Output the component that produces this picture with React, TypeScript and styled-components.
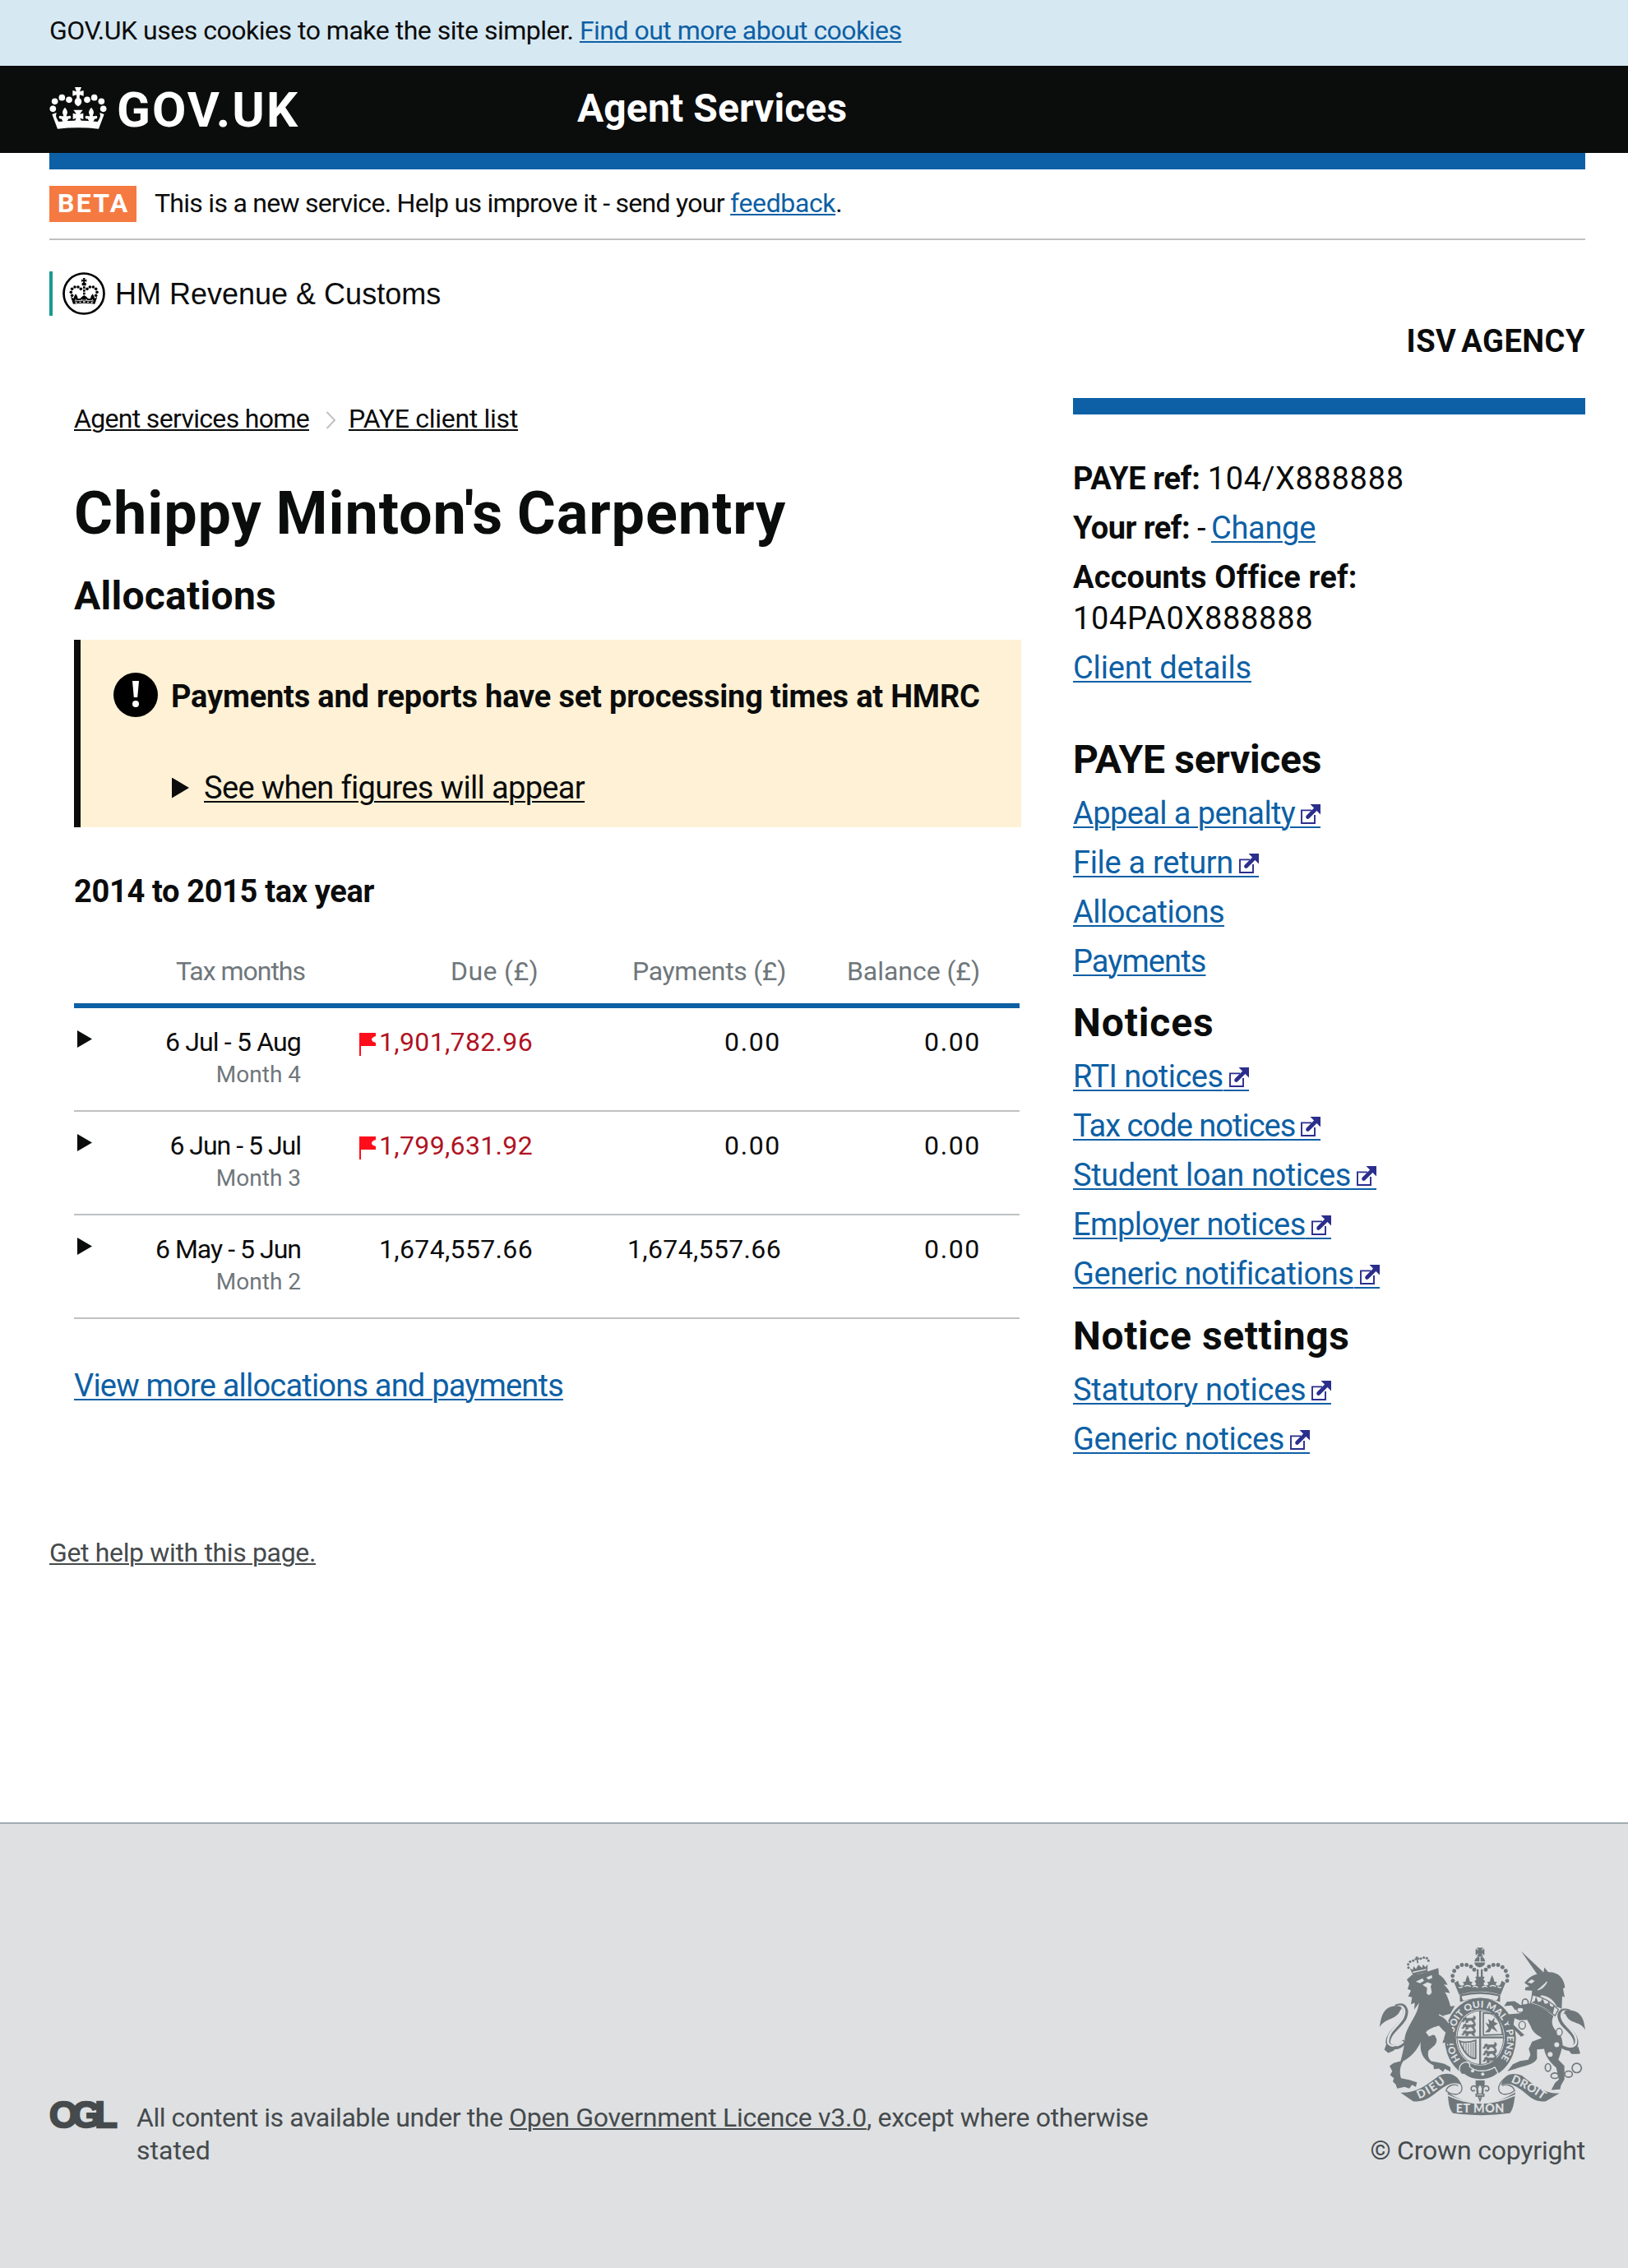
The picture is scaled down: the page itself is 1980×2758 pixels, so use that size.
import React from 'react';
import styled, { createGlobalStyle } from 'styled-components';

const color = {
  ink: '#0b0c0c',
  blue: '#0d60a5',
  orange: '#f57a42',
  grey: '#6f777b',
  line: '#bfc1c3',
  footer: '#454a4c',
  footerBg: '#dee0e2',
  arms: '#6f777b',
  indigo: '#2b2e8c',
};

const GlobalStyle = createGlobalStyle`
  * { box-sizing: border-box; }
  body {
    margin: 0;
    background: #fff;
    color: ${color.ink};
    font-family: Roboto, "Noto Sans", sans-serif;
    font-size: 38px;
    line-height: 50px;
  }
  h1, h2, h3, p, ul { margin: 0; padding: 0; }
  ul { list-style: none; }
`;

/* Run of text with its own tracking */
const Run = styled.span<{ $track?: number; $bold?: boolean }>`
  letter-spacing: ${(p) => p.$track ?? 0}px;
  font-weight: ${(p) => (p.$bold ? 700 : 'inherit')};
  white-space: pre;
`;

const Link = styled.a<{ $track?: number; $tone?: string; $offset?: number }>`
  color: ${(p) => p.$tone ?? color.blue};
  letter-spacing: ${(p) => p.$track ?? 0}px;
  text-decoration: underline;
  text-decoration-thickness: 2px;
  text-underline-offset: ${(p) => p.$offset ?? 3}px;
  white-space: nowrap;
`;

const Page = styled.div`
  width: 1980px;
  height: 2758px;
  display: flex;
  flex-direction: column;
`;

const CookieBar = styled.div`
  height: 80px;
  padding: 17px 60px 0;
  background: #d6e8f2;
  font-size: 32px;
  line-height: 40px;
`;

const Header = styled.header`
  height: 106px;
  padding-left: 60px;
  display: grid;
  grid-template-columns: 642px 1fr;
  background: ${color.ink};
  color: #fff;
`;

const Brand = styled.div`
  display: flex;
  gap: 12px;
  padding-top: 24px;
  font-size: 60px;
  line-height: 60px;
  font-weight: 700;
  letter-spacing: 2.1px;
`;

const ServiceName = styled.div`
  padding-top: 22px;
  font-size: 48px;
  line-height: 60px;
  font-weight: 700;
  letter-spacing: 0.1px;
`;

const Wrapper = styled.div`
  margin: 0 52px 0 60px;
`;

const HeaderBar = styled.div`
  height: 20px;
  background: ${color.blue};
`;

const PhaseBanner = styled.div`
  display: flex;
  height: 86px;
  padding-top: 20px;
  border-bottom: 2px solid ${color.line};
  font-size: 32px;
  line-height: 42px;
`;

const PhaseTag = styled.strong`
  width: 106px;
  height: 44px;
  margin-right: 22px;
  padding-left: 10px;
  background: ${color.orange};
  color: #fff;
  letter-spacing: 2.3px;
`;

const Department = styled.div`
  display: flex;
  align-items: center;
  height: 54px;
  margin-top: 38px;
  padding-left: 11px;
  border-left: 4px solid #199990;
  font-family: "Liberation Sans", Arial, sans-serif;
  font-size: 36px;
  line-height: 54px;
`;

const DepartmentName = styled.span`
  margin-left: 11px;
  padding-top: 2px;
`;

const AgencyName = styled.p`
  margin-top: 11px;
  text-align: right;
  font-weight: 700;
  line-height: 40px;
  letter-spacing: 0.5px;
  word-spacing: -4px;
`;

const Columns = styled.div`
  display: grid;
  grid-template-columns: 1152px 623px;
  justify-content: space-between;
  height: 1350px;
  padding-left: 30px;
`;

const Main = styled.main`
  padding-top: 54px;
`;

const Breadcrumb = styled.nav`
  display: flex;
  align-items: center;
  font-size: 32px;
  line-height: 40px;
`;

const Chevron = styled.svg`
  width: 13px;
  height: 22px;
  margin: 3px 15px 0 20px;
`;

const Title = styled.h1`
  margin-top: 56px;
  font-size: 72px;
  line-height: 80px;
  letter-spacing: 0.9px;
  word-spacing: -2px;
`;

const SectionTitle = styled.h2`
  margin-top: 35px;
  font-size: 48px;
  line-height: 50px;
  letter-spacing: 0.27px;
`;

const Notice = styled.section`
  display: grid;
  grid-template-columns: 54px 1fr;
  column-gap: 16px;
  height: 228px;
  margin-top: 28px;
  padding: 40px 0 0 40px;
  border-left: 8px solid ${color.ink};
  background: #fff1d5;
  line-height: 40px;
`;

const NoticeIcon = styled.svg`
  width: 54px;
  height: 54px;
`;

const NoticeText = styled.div`
  padding-top: 9px;
`;

const NoticeTitle = styled.p`
  font-weight: 700;
  letter-spacing: -0.19px;
  white-space: nowrap;
`;

const Disclosure = styled.div`
  display: flex;
  align-items: center;
  gap: 18px;
  margin-top: 71px;
  padding-left: 1px;
`;

const Triangle = styled.span<{ $w: number; $h: number }>`
  width: ${(p) => p.$w}px;
  height: ${(p) => p.$h}px;
  flex: none;
  background: ${color.ink};
  clip-path: polygon(0 0, 100% 50%, 0 100%);
`;

const YearTitle = styled.h3`
  margin-top: 58px;
  font-size: 38px;
  line-height: 40px;
  letter-spacing: -0.34px;
`;

const TableRow = styled.div<{ $head?: boolean }>`
  display: grid;
  grid-template-columns: 282px 283px 302px 236px;
  width: 1150px;
  height: ${(p) => (p.$head ? 66 : 126)}px;
  margin-top: ${(p) => (p.$head ? 56 : 0)}px;
  padding-top: ${(p) => (p.$head ? 1 : 21)}px;
  border-bottom: ${(p) => (p.$head ? `6px solid ${color.blue}` : `2px solid ${color.line}`)};
  color: ${(p) => (p.$head ? color.grey : color.ink)};
  font-size: 32px;
  line-height: 40px;
  text-align: right;
`;

const Cell = styled.div<{ $inset?: number; $track?: number; $late?: boolean }>`
  padding-right: ${(p) => p.$inset ?? 7}px;
  letter-spacing: ${(p) => p.$track ?? 0}px;
  color: ${(p) => (p.$late ? '#b01223' : 'inherit')};
`;

const MonthCell = styled.div`
  display: flex;
  justify-content: space-between;
  padding: 0 6px 0 4px;

  > ${Triangle} {
    margin-top: 6px;
  }
`;

const MonthNumber = styled.div`
  color: ${color.grey};
  font-size: 28px;
  line-height: 39px;
`;

const Flag = styled.svg`
  width: 20px;
  height: 28px;
  margin-right: 4px;
  vertical-align: -6px;
`;

const MoreLink = styled.p`
  margin-top: 61px;
  line-height: 40px;
`;

const Aside = styled.aside`
  padding-top: 49px;
`;

const AsideBar = styled.div`
  height: 20px;
  margin-bottom: 53px;
  background: ${color.blue};
`;

const Item = styled.li`
  margin-bottom: 10px;
`;

const AsideTitle = styled.h2<{ $top?: number }>`
  margin: ${(p) => p.$top ?? 25.3}px 0 15.3px;
  font-size: 48px;
  line-height: 50px;
`;

const ExternalMark = styled.span`
  display: inline-block;
  height: 29px;
  padding-left: 7px;
  border-bottom: 2px solid ${color.blue};
  vertical-align: -5px;

  svg {
    display: block;
    width: 24px;
    height: 24px;
  }
`;

const HelpLine = styled.p`
  margin-top: 83px;
  font-size: 32px;
  line-height: 40px;
`;

const Footer = styled.footer`
  display: flex;
  align-items: flex-end;
  justify-content: space-between;
  height: 542px;
  margin-top: auto;
  padding: 0 52px 123px 60px;
  border-top: 2px solid #a1acb2;
  background: ${color.footerBg};
  color: ${color.footer};
  font-size: 32px;
  line-height: 40px;
`;

const Licence = styled.div`
  display: flex;
  height: 80px;
`;

const OglMark = styled.span`
  width: 106px;
  font-family: "Liberation Sans", Arial, sans-serif;
  font-size: 45px;
  font-weight: 700;
  line-height: 34px;
  letter-spacing: -7.4px;
  -webkit-text-stroke: 2.4px ${color.footer};
`;

const LicenceText = styled.p`
  width: 1260px;
`;

const Copyright = styled.div`
  display: flex;
  flex-direction: column;
  align-items: flex-end;
  gap: 22px;
  letter-spacing: -0.2px;
`;

const Arms = styled.svg`
  width: 250px;
  height: 205px;
  overflow: visible;
`;

const BrandCrown = styled.svg`
  width: 70px;
  height: 52px;
  margin-top: 1px;
`;

const Roundel = styled.svg`
  width: 54px;
  height: 54px;
`;

function GovCrown() {
  const pearls = [[43, 127], [50, 100], [76, 86], [102, 94]];
  const fleur =
    'M87 122c5 6 9 12 9 19l-4 13h8c4-4 9-1 9 4-1 5-7 7-9 5-2 6-6 9-7 14H81c-1-5-5-8-7-14-2 2-8 0-9-5 0-5 5-8 9-4h8l-4-13c0-7 4-13 9-19z';
  return (
    <BrandCrown viewBox="30 45 210 156" fill="#fff">
      {pearls.map(([x, y]) => (
        <g key={x}>
          <circle cx={x} cy={y} r="11.5" />
          <circle cx={270 - x} cy={y} r="11.5" />
        </g>
      ))}
      <path d="M123 48h24l-6 16 14-4v20l-14-4-1 11c12 9 10 24-5 31-15-7-17-22-5-31l-1-11-14 4V60l14 4z" />
      <path d="M60 200L40 147l16-6-2 12c2 8 6 16 10 21q71-9 142 0c4-5 8-13 10-21l-2-12 16 6-20 53q-75-8-150 0z" />
      <path d="M118 131h34l-11 15 13-3v22l-12-4 6 14h-26l6-14-12 4v-22l13 3z" />
      <path d={fleur} />
      <path d={fleur} transform="translate(270 0) scale(-1 1)" />
    </BrandCrown>
  );
}

function HmrcRoundel() {
  const pearls = [[112, 117], [108, 105], [112, 93], [122, 86], [134, 86], [144, 93]];
  return (
    <Roundel viewBox="74 29 162 162">
      <circle cx="155" cy="110" r="73.5" fill="none" stroke="#000" strokeWidth="8" />
      <g fill="#000">
        {pearls.map(([x, y]) => (
          <g key={`${x}-${y}`}>
            <circle cx={x} cy={y} r="5.4" />
            <circle cx={311 - x} cy={y} r="5.4" />
          </g>
        ))}
        <path d="M152 53h8l-2 7 7-2v9l-7-2 1 6h4v10h-15V71h4l1-6-7 2v-9l7 2z" />
        <path d="M152 84h8v8h-8zM152 95h8v8h-8zM152 106h8v8h-8z" />
        <path d="M107 121l10 7 3-8 5-9 6 9 2 9 9-1 6-7 8-5 8 5 6 7 9 1 2-9 6-9 5 9 3 8 9-7-9 27q-40-6-79 0z" />
      </g>
      <path d="M121 137q35-6 70 0M123 131l5 4M188 131l-5 4M145 133l5-2M167 133l-5-2" stroke="#fff" strokeWidth="2.5" fill="none" />
      <path d="M124 143h6M138 141h7M152 140h8M167 141h7M181 143h6" stroke="#fff" strokeWidth="4" />
    </Roundel>
  );
}

function ExternalIcon() {
  return (
    <ExternalMark>
      <svg viewBox="0 0 24 24">
        <path d="M13 7.4H1V23h16V13" fill="none" stroke={color.indigo} strokeWidth="1.9" />
        <path d="M8.5 15.5L19 5" stroke={color.indigo} strokeWidth="4.6" strokeLinecap="round" />
        <path d="M11.5 0H24v12.5z" fill={color.indigo} />
      </svg>
    </ExternalMark>
  );
}

function LateFlag() {
  return (
    <Flag viewBox="0 0 20 28">
      <path d="M0 0h20v4c-3 1-5 2-5 4s2 3 5 4v4H2v12H0z" fill="#ff0d1a" />
    </Flag>
  );
}

/* Three walking lions, stacked, for the English quarters */
function Leopards({ x, y }: { x: number; y: number }) {
  return (
    <g transform={`translate(${x} ${y})`}>
      {[0, 24, 48].map((dy) => (
        <path
          key={dy}
          transform={`translate(0 ${dy})`}
          d="M2 8l8-5 5 5 18-1c6 0 9-5 6-9l7 4c2 8-3 11-5 14l4 8-8-2-6-7-10 1-3 8-8-1 3-6-5-3-5 7-7-2 6-6z"
          stroke={color.arms}
          strokeWidth="2"
        />
      ))}
    </g>
  );
}

function RoyalArms() {
  const dots = [[381, 205], [380, 187], [386, 169], [398, 155], [414, 147], [431, 147], [447, 153], [459, 164]];
  const smallDots = [[219, 157], [218, 145], [225, 135], [236, 131], [264, 124], [275, 120], [286, 122], [292, 131]];
  const bg = color.footerBg;
  return (
    <Arms viewBox="114 84 750 612" fill={color.arms}>
      {/* centre crown */}
      <path d="M468 84h24l-8 11 12-7v23l-12-7 8 12h-24l8-12-12 7V88l12 7z" />
      <path d="M460 134c2-12 9-17 18-18v18zM482 116c10 1 15 7 17 18h-17zM459 138h40c-2 11-9 16-20 18-12-2-18-8-20-18z" />
      <path d="M468 163h7v30h-7zM483 163h7v30h-7z" />
      {dots.map(([x, y]) => (
        <g key={`${x}-${y}`}>
          <circle cx={x} cy={y} r="7.4" />
          <circle cx={960 - x} cy={y} r="7.4" />
        </g>
      ))}
      <path d="M386 212l14-7 4 12c4 8 16 8 18 0l-5-8 10-1 2-10 6-14 6 14 2 10 10 1-5 8c4 8 16 6 18-2l-6-9 7-6-4-10h34l-5 10 7 6-6 9c2 8 14 10 18 2l-5-8 10-1 2-10 6-14 6 14 2 10 10 1-5 8c2 8 14 8 18 0l4-12 14 7-18 44q-74-24-151 0z" />
      <path d="M402 228q8 4 16-2M424 226q10-8 22 0M454 228q10-8 18 2M488 230q8-10 18-2M516 226q10-8 22 0M544 226q8 6 14 2" fill="none" stroke={bg} strokeWidth="4" />
      <path d="M406 256q74-22 148 0l-1 26q-73-25-146 0z" />
      <path d="M413 261q67-17 134 0-2 13-8 16-57-18-118 0-7-4-8-16z" fill={bg} />

      {/* garter and shield */}
      <ellipse cx="481" cy="415" rx="130" ry="148" />
      <ellipse cx="481" cy="412" rx="89" ry="102" fill={bg} />
      <ellipse cx="481" cy="412" rx="85" ry="98" fill="none" stroke={color.arms} strokeWidth="3" />
      <path d="M477 313h7v198h-7zM394 408h174v7H394z" />
      <Leopards x={417} y={334} />
      <Leopards x={494} y={431} />
      <path d="M492 322l40 3q26 30 30 76l-70 2z" fill="none" stroke={color.arms} strokeWidth="5" />
      <path d="M498 393l14-15-12-20 14 6-4-20 12 8 12-14-3 16 14 7-14 9 14 22-22-14-8 14z" />
      <path d="M406 425c22 8 40 4 58-3v66c-20 2-46-22-58-63z" fill="none" stroke={color.arms} strokeWidth="6" />
      <path d="M420 432v26M429 433v38M438 434v46M447 431v54M455 430v58" stroke={color.arms} strokeWidth="3" />
      <defs>
        <path id="garter" d="M409 492A98 113 0 1 1 540 506" />
        <path id="ribbonLeft" d="M257 636Q315 612 362 568" />
        <path id="ribbonRight" d="M592 574Q650 598 706 637" />
      </defs>
      <text fill={bg} fontFamily="Lato, sans-serif" fontWeight="900" fontSize="34">
        <textPath href="#garter" textLength="492" lengthAdjust="spacingAndGlyphs">HONI SOIT QUI MAL Y PENSE</textPath>
      </text>
      <path d="M408 514c18-22 38-12 34 4 30 24 68 16 92 2l12 22c-30 28-88 32-124 4-12 4-22-12-14-32z" stroke={bg} strokeWidth="4" />
      <circle cx="453" cy="533" r="6" fill={bg} />
      <circle cx="490" cy="545" r="6" fill={bg} />

      {/* lion */}
      <g transform="rotate(-12 256 150)">
        <path d="M223 152l9 8 6-12 6 12 12-14 11 14 6-12 6 12 10-8-6 27h-54z" />
        <path d="M230 169h51" stroke={bg} strokeWidth="4" />
        <path d="M251 116h10l-3 6 6-2v8l-6-1v13h-5v-13l-6 1v-8l6 2z" />
      </g>
      {smallDots.map(([x, y]) => (
        <circle key={`${x}-${y}`} cx={x} cy={y} r="4.6" />
      ))}
      <path d="M213 200l19-17 36-5 60-20 2 24c15 8 25 23 32 38l-14-2c12 12 20 22 22 32l-18-4c10 16 16 34 20 52l16-2-16 29-27 7 23 26c14 22 20 52 22 80l-18-8-6 12-8-14-15 4 7-24 12-8-17-15-15-17c-25 7-40 15-47 24 17-4 35 6 39 28 0 20-17 26-30 40-4 15 0 30 10 38 16 4 33 5 48 10l22 12v16l-20-10-7 11-15-12-18 2-2-14c-15-8-35-23-42-43-6-15-6-30-4-42-12 24-29 50-64 70-12 17-15 42-8 62l30 6 28 9-4 17-14-8-10 14-17-6-27 6-6-16-10-10 4-12-14-12 8-13-10-20 15-10 25-7c8-28 15-58 15-83 5-35 30-65 43-95 7-15 7-25 10-35l-18 25 2-25-14 5 4-25-14-3 10-22-12-5 6-20z" />
      <path d="M246 208l24-12 6 9-15 9zM284 193l20-9 2 10-14 6zM270 220l18-10 16 6-4 10 4 20c-4 12-14 14-19 4l2-20z" fill={bg} />
      <path d="M366 358c-8-14-22-24-36-30" stroke={bg} strokeWidth="4" fill="none" />
      <path d="M282 392l18-10 22 4 12-6 8 12 14 2-10 12 4 14-24-16-18-2-14 6z" fill={bg} />
      <path d="M172 300c34-14 44 12 32 40-14 30-58 52-60 88 2 24 40 28 62-4" fill="none" stroke={color.arms} strokeWidth="17" />
      <path d="M172 301c31-11 38 12 27 37-14 30-56 50-55 90 4 18 34 20 56-2" fill="none" stroke={bg} strokeWidth="8" />
      <path d="M114 374c4-34 12-78 60-78 18 0 26 6 14 18-14 34-56 26-74 60zM131 456l8-22 18 12 20-4-12 18-20 8z" />

      {/* unicorn */}
      <path d="M630 97l82 77-22 9z" />
      <path d="M642 212c14-16 30-30 50-32l20-6 3-18 14 17c36-2 58 22 61 56l-7 4 6 32-9-4-2 46-18-8c-8-20-26-38-56-42l-12 12-24-4 2-24-26-2 2-10 14-4z" />
      <path d="M658 210l10-8 8 4-8 6zM690 238c18-4 28-18 34-30" fill={bg} stroke={bg} strokeWidth="4" />
      <path d="M672 256q58 12 94 54l-12 22q-40-32-90-44z" fill={bg} stroke={color.arms} strokeWidth="4" />
      <path d="M668 284l12-6 4-16 8 20 10-2 6-12 8 20 10 0 6-10 4 18 8 4 10-8-8 32q-30-26-78-40z" />
      <path d="M660 287q50 12 88 46c-12 26-2 48 24 68 18 32 4 60-6 92l22 22v50l-12 20-4 16-32 2 14-26 14-12-10-44c-24-20-40-42-44-68l-26 2v34c-10 22-50 26-76 36l-32 10 20-26 26-12 30-4 8-18-6-22 12-26 36-14c-14-8-34-20-40-40l-14-26-28 2-18-8-4 24 40 38-12 6-46-48-2-34 46-4 2-18-22 6-12-16-28 2 10-16 28-2 22 14z" />
      <g fill="none" stroke={color.arms} strokeWidth="5">
        <ellipse cx="645" cy="285" rx="11" ry="14" />
        <ellipse cx="728" cy="521" rx="10" ry="14" />
        <ellipse cx="753" cy="551" rx="14" ry="10" />
        <ellipse cx="803" cy="545" rx="14" ry="11" />
        <circle cx="833" cy="523" r="17" />
      </g>
      <g fill={bg} stroke={color.arms} strokeWidth="4">
        <ellipse cx="627" cy="311" rx="12" ry="9" />
        <ellipse cx="634" cy="367" rx="12" ry="14" />
        <ellipse cx="769" cy="392" rx="11" ry="14" />
      </g>
      <circle cx="760" cy="438" r="9" fill={bg} />
      <circle cx="736" cy="473" r="9" fill={bg} />
      <path d="M806 318c-34-12-44 12-26 40 12 18 54 44 50 76-4 24-36 22-54 4" fill="none" stroke={color.arms} strokeWidth="17" />
      <path d="M806 319c-31-10-35 12-20 36 12 18 52 44 44 78-6 16-32 14-48 2" fill="none" stroke={bg} strokeWidth="8" />
      <path d="M864 384c-4-34-12-70-58-72-18 0-24 6-12 18 14 34 52 20 70 54zM846 470l-8-26-16 14-22-4 14 18 20 0z" />

      {/* motto ribbon */}
      <path d="M372 548c34 18 50 44 38 62-12 14-36 10-54-4 6-22 34-26 44-18" fill="none" stroke={color.arms} strokeWidth="4" />
      <path d="M590 548c-34 18-50 44-38 62 12 14 36 10 54-4-6-22-34-26-44-18" fill="none" stroke={color.arms} strokeWidth="4" />
      <path d="M190 613c60 2 96-30 140-62 34-16 70-6 82 34-24-14-50-4-76 16-34 26-56 48-100 43z" />
      <path d="M770 615c-60 2-92-30-136-64-34-14-66-8-78 36 24-14 46-4 72 14 34 26 48 48 92 43z" />
      <path d="M362 612q118 80 247 0c-4 30-6 60-20 76q-104 14-208 0c-16-20-16-46-19-76z" />
      <path d="M362 622q118 58 247 0" fill="none" stroke={bg} strokeWidth="5" />
      <g fill={bg} fontFamily="Lato, sans-serif" fontWeight="900">
        <text fontSize="42">
          <textPath href="#ribbonLeft" textLength="116">DIEU</textPath>
        </text>
        <text fontSize="42">
          <textPath href="#ribbonRight" textLength="134">DROIT</textPath>
        </text>
        <text x="392" y="686" fontSize="43" textLength="176">ET MON</text>
      </g>
      <g fill={bg} stroke={color.arms} strokeWidth="5">
        <path d="M464 568h33v22h-33z" fill={color.arms} stroke="none" />
        <path d="M480 580c12 14 14 26 8 40h-16c-6-14-4-26 8-40z" />
        <path d="M472 620c2-14-2-30-14-32-10 0-14 12-6 18 4 2 8 0 8-4M488 620c-2-14 2-30 14-32 10 0 14 12 6 18-4 2-8 0-8-4" fill="none" />
        <path d="M466 618h28v7h-28zM474 626h12l-6 16z" />
      </g>
    </Arms>
  );
}

type NavEntry = { label: string; track: number; external?: boolean };
type NavGroup = { title: string; track: number; top?: number; items: NavEntry[] };

const groups: NavGroup[] = [
  {
    title: 'PAYE services',
    track: -0.31,
    top: 61.5,
    items: [
      { label: 'Appeal a penalty', track: -0.6, external: true },
      { label: 'File a return', track: -0.31, external: true },
      { label: 'Allocations', track: -0.49 },
      { label: 'Payments', track: -0.9 },
    ],
  },
  {
    title: 'Notices',
    track: 0.85,
    items: [
      { label: 'RTI notices', track: -0.53, external: true },
      { label: 'Tax code notices', track: -0.98, external: true },
      { label: 'Student loan notices', track: -0.42, external: true },
      { label: 'Employer notices', track: -0.52, external: true },
      { label: 'Generic notifications', track: -0.4, external: true },
    ],
  },
  {
    title: 'Notice settings',
    track: 0.6,
    items: [
      { label: 'Statutory notices', track: -0.23, external: true },
      { label: 'Generic notices', track: -0.37, external: true },
    ],
  },
];

const months = [
  { period: '6 Jul - 5 Aug', track: -0.84, month: 'Month 4', due: '1,901,782.96', late: true, paid: '0.00' },
  { period: '6 Jun - 5 Jul', track: -1, month: 'Month 3', due: '1,799,631.92', late: true, paid: '0.00' },
  { period: '6 May - 5 Jun', track: -0.98, month: 'Month 2', due: '1,674,557.66', late: false, paid: '1,674,557.66' },
];

const amountTrack = (value: string) => (value === '0.00' ? 1.65 : 0.34);

export default function App() {
  return (
    <Page>
      <GlobalStyle />
      <CookieBar>
        <Run $track={-0.49}>GOV.UK uses cookies to make the site simpler. </Run>
        <Link $track={-0.52} $offset={2}>Find out more about cookies</Link>
      </CookieBar>
      <Header>
        <Brand>
          <GovCrown />
          GOV.UK
        </Brand>
        <ServiceName>Agent Services</ServiceName>
      </Header>
      <Wrapper>
        <HeaderBar />
        <PhaseBanner>
          <PhaseTag>BETA</PhaseTag>
          <Run $track={-0.72}>This is a new service. Help us improve it - send your </Run>
          <Link $track={-0.38} $offset={2}>feedback</Link>.
        </PhaseBanner>
        <Department>
          <HmrcRoundel />
          <DepartmentName>HM Revenue &amp; Customs</DepartmentName>
        </Department>
        <AgencyName>ISV AGENCY</AgencyName>
        <Columns>
          <Main>
            <Breadcrumb>
              <Link $tone={color.ink} $track={-0.68} $offset={2}>Agent services home</Link>
              <Chevron viewBox="0 0 13 22" fill="none" stroke={color.line} strokeWidth="2">
                <path d="M1.5 1l9.500 10-9.500 10" />
              </Chevron>
              <Link $tone={color.ink} $track={-0.29} $offset={2}>PAYE client list</Link>
            </Breadcrumb>
            <Title>Chippy Minton's Carpentry</Title>
            <SectionTitle>Allocations</SectionTitle>
            <Notice>
              <NoticeIcon viewBox="0 0 54 54">
                <circle cx="27" cy="27" r="27" fill="#000" />
                <path d="M23 10h8l-1.800 20h-4.400z" fill="#fff" />
                <circle cx="27" cy="38" r="4" fill="#fff" />
              </NoticeIcon>
              <NoticeText>
                <NoticeTitle>Payments and reports have set processing times at HMRC</NoticeTitle>
                <Disclosure>
                  <Triangle $w={21} $h={25} />
                  <Link $tone={color.ink} $track={-0.66}>See when figures will appear</Link>
                </Disclosure>
              </NoticeText>
            </Notice>
            <YearTitle>2014 to 2015 tax year</YearTitle>
            <TableRow $head>
              <Cell $inset={1} $track={-1.01}>Tax months</Cell>
              <Cell $inset={0} $track={0.39}>Due (£)</Cell>
              <Cell $inset={1} $track={-0.3}>Payments (£)</Cell>
              <Cell $inset={1} $track={-0.05}>Balance (£)</Cell>
            </TableRow>
            {months.map((m) => (
              <TableRow key={m.month}>
                <MonthCell>
                  <Triangle $w={18} $h={21} />
                  <div>
                    <Run $track={m.track}>{m.period}</Run>
                    <MonthNumber>{m.month}</MonthNumber>
                  </div>
                </MonthCell>
                <Cell $late={m.late} $track={amountTrack(m.due)}>
                  {m.late && <LateFlag />}
                  {m.due}
                </Cell>
                <Cell $track={amountTrack(m.paid)}>{m.paid}</Cell>
                <Cell $inset={0} $track={1.65}>0.00</Cell>
              </TableRow>
            ))}
            <MoreLink>
              <Link $track={-0.8}>View more allocations and payments</Link>
            </MoreLink>
          </Main>
          <Aside>
            <AsideBar />
            <ul>
              <Item>
                <Run $bold $track={-0.3}>PAYE ref: </Run>
                <Run $track={0.66}>104/X888888</Run>
              </Item>
              <Item>
                <Run $bold $track={-0.52}>Your ref: </Run>
                <Run $track={-1.5}>- </Run>
                <Link $track={-0.3}>Change</Link>
              </Item>
              <Item>
                <Run $bold $track={0.15}>Accounts Office ref:</Run>
                <br />
                <Run $track={0.66}>104PA0X888888</Run>
              </Item>
              <Item>
                <Link $track={-0.14}>Client details</Link>
              </Item>
            </ul>
            {groups.map((group) => (
              <section key={group.title}>
                <AsideTitle $top={group.top}>
                  <Run $track={group.track}>{group.title}</Run>
                </AsideTitle>
                <ul>
                  {group.items.map((item) => (
                    <Item key={item.label}>
                      <Link $track={item.track}>{item.label}</Link>
                      {item.external && <ExternalIcon />}
                    </Item>
                  ))}
                </ul>
              </section>
            ))}
          </Aside>
        </Columns>
        <HelpLine>
          <Link $tone={color.footer} $track={-0.35} $offset={2}>Get help with this page.</Link>
        </HelpLine>
      </Wrapper>
      <Footer>
        <Licence>
          <OglMark>OGL</OglMark>
          <LicenceText>
            <Run $track={-0.44}>All content is available under the </Run>
            <Link $tone={color.footer} $track={-0.26} $offset={2}>Open Government Licence v3.0</Link>
            <Run $track={-0.34}>, except where otherwise</Run>
            <br />
            stated
          </LicenceText>
        </Licence>
        <Copyright>
          <RoyalArms />
          <span>© Crown copyright</span>
        </Copyright>
      </Footer>
    </Page>
  );
}
